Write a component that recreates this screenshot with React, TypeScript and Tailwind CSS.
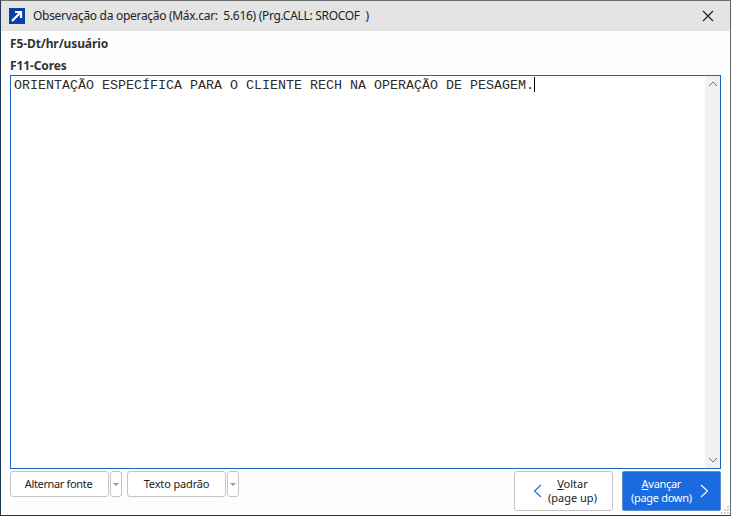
import React from "react";

const Caret = () => (
  <svg width="6" height="3" viewBox="0 0 6 3"><path d="M0 0 H6 L3 3 Z" fill="#6f9fe8" /></svg>
);

export default function App() {
  return (
    <div className="w-[745px] h-[523px] bg-white font-['Noto_Sans','Open_Sans',sans-serif]">
      <div className="w-[731px] h-[516px] border border-t-[#6f6f6f] border-r-[#5f6468] border-b-[#1f3a52] border-l-[#1f3a52] bg-[#fdfdfd] flex flex-col relative">
        <div className="h-[30px] bg-[#e4e4e4] flex items-center shrink-0">
          <div className="ml-[8px] w-4 h-4 bg-[#0a3fa8] flex items-center justify-center">
            <svg width="16" height="16" viewBox="0 0 16 16">
              <path d="M3 13 L11 5 M6 4 H12 V10" stroke="#fff" strokeWidth="2.2" fill="none" />
            </svg>
          </div>
          <span className="ml-[8px] text-[12px] tracking-[-0.3px] text-[#222] whitespace-pre">Observação da operação (Máx.car:  5.616) (Prg.CALL: SROCOF  )</span>
          <svg className="ml-auto mr-[16px]" width="12" height="12" viewBox="0 0 12 12">
            <path d="M1 1 L11 11 M11 1 L1 11" stroke="#222" strokeWidth="1.2" />
          </svg>
        </div>
        <div className="flex-1 flex flex-col pl-[9px] min-h-0">
          <div className="h-[25px] flex items-center text-[12px] font-bold tracking-[-0.1px] text-[#333]">F5-Dt/hr/usuário</div>
          <div className="h-[19px] flex items-center text-[12px] font-bold tracking-[-0.1px] text-[#333]">F11-Cores</div>
          <div className="h-[394px] w-[711px] border border-[#1a62c4] bg-white flex">
            <div className="flex-1 pl-[3px] pt-px font-['Liberation_Mono',monospace] text-[13.33px] leading-[17px] text-[#2b2b2b] whitespace-pre">
              ORIENTAÇÃO ESPECÍFICA PARA O CLIENTE RECH NA OPERAÇÃO DE PESAGEM.<span className="inline-block w-px h-[15px] bg-black align-[-3px]"></span>
            </div>
            <div className="w-[15px] bg-[#f1f1f1] flex flex-col justify-between items-center py-[5px]">
              <svg width="10" height="6" viewBox="0 0 10 6"><path d="M1 5 L5 1 L9 5" stroke="#777" fill="none" /></svg>
              <svg width="10" height="6" viewBox="0 0 10 6"><path d="M1 1 L5 5 L9 1" stroke="#777" fill="none" /></svg>
            </div>
          </div>
          <div className="flex items-start mt-[2px] w-[711px]">
            <button className="w-[99px] h-[26px] pt-px pr-[2px] border border-[#c4c4c4] rounded-[3px] bg-white text-[11px] tracking-[-0.35px] text-[#222]">Alternar fonte</button>
            <button className="ml-px w-[12px] h-[26px] border border-[#c4c4c4] rounded-[3px] bg-white flex items-center justify-center"><Caret /></button>
            <button className="ml-[5px] w-[99px] h-[26px] pt-px border border-[#c4c4c4] rounded-[3px] bg-white text-[11px] tracking-[-0.15px] text-[#222]">Texto padrão</button>
            <button className="ml-px w-[12px] h-[26px] border border-[#c4c4c4] rounded-[3px] bg-white flex items-center justify-center"><Caret /></button>
            <button className="ml-auto w-[99px] h-[40px] border border-[#c4c4c4] rounded-[3px] bg-white text-[11px] leading-[14px] text-[#222] flex items-center">
              <svg className="ml-[18px]" width="9" height="14" viewBox="0 0 9 14"><path d="M8 1 L1.5 7 L8 13" stroke="#1a6ad8" strokeWidth="1.1" fill="none" /></svg>
              <span className="ml-[6px] text-center"><span className="underline">V</span>oltar<br />(page up)</span>
            </button>
            <button className="ml-[9px] w-[99px] h-[40px] rounded-[2px] border border-[#5f8fd0] bg-[#1a6ae0] text-[11px] tracking-[-0.3px] leading-[14px] text-white flex items-center">
              <span className="ml-[8px] text-center"><span className="underline">A</span>vançar<br />(page down)</span>
              <svg className="ml-[8px]" width="9" height="14" viewBox="0 0 9 14"><path d="M1 1 L7.5 7 L1 13" stroke="#fff" strokeWidth="1.1" fill="none" /></svg>
            </button>
          </div>
        </div>
        <svg className="absolute right-[1px] bottom-[1px]" width="8" height="8" viewBox="0 0 8 8">
          <path d="M6 0h2v2H6z M3 3h2v2H3z M6 3h2v2H6z M0 6h2v2H0z M3 6h2v2H3z M6 6h2v2H6z" fill="#cfcfcf" />
        </svg>
      </div>
    </div>
  );
}
